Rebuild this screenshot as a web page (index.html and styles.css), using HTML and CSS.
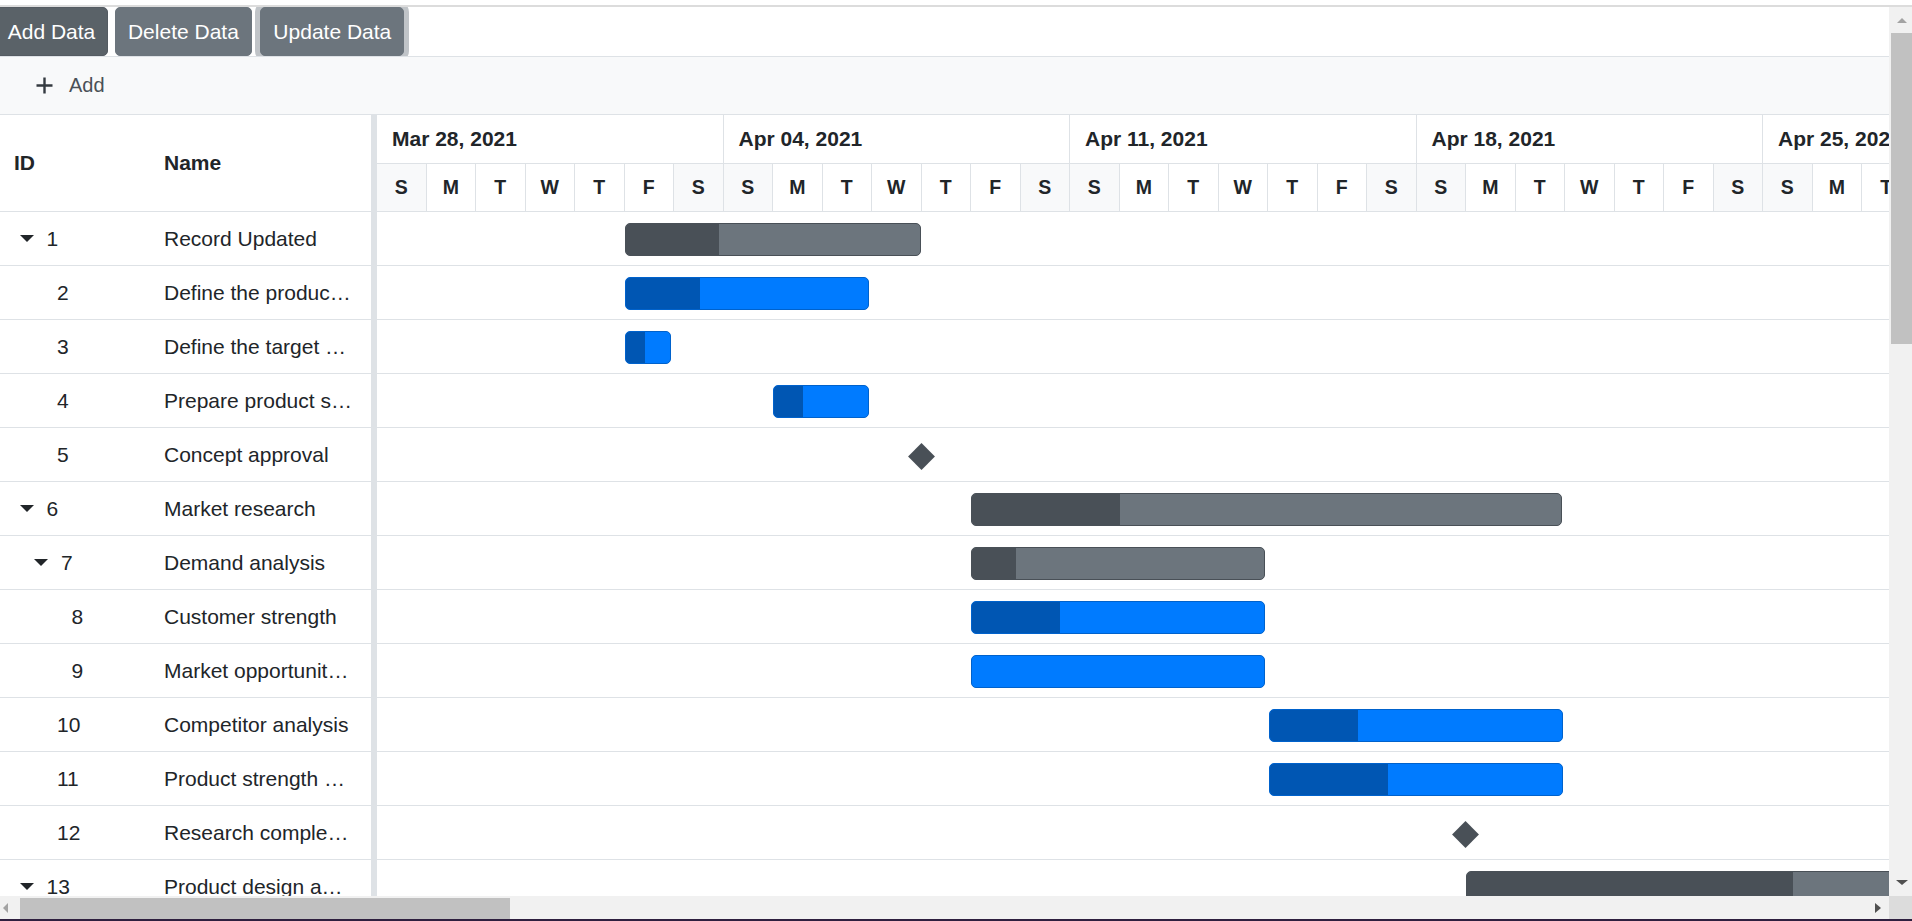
FILE: index.html
```html
<!DOCTYPE html>
<html lang="en">
<head>
<meta charset="utf-8">
<title>Gantt</title>
<link rel="stylesheet" href="styles.css">
</head>
<body>
<div class="topline"></div>
<div class="viewport">
  <div class="main">
    <div class="btnbar">
      <button class="btn btn-add">Add Data</button>
      <button class="btn btn-del">Delete Data</button>
      <button class="btn btn-upd">Update Data</button>
    </div>
    <div class="toolbar">
      <div class="tb-add">
        <svg class="plus" width="17" height="17" viewBox="0 0 17 17"><path d="M8.5 0.5V16.5M0.5 8.5H16.5" stroke="#343a40" stroke-width="2.4" fill="none"/></svg>
        <span>Add</span>
      </div>
    </div>
    <div class="gantt">
      <div class="grid-pane">
        <div class="grid-head">
          <div class="hc id">ID</div>
          <div class="hc name">Name</div>
        </div>
        <div class="grow"><div class="c id p0"><i class="caret"></i>1</div><div class="c name"><span class="txt">Record Updated</span></div></div>
        <div class="grow"><div class="c id l1">2</div><div class="c name"><span class="txt">Define the product usage</span></div></div>
        <div class="grow"><div class="c id l1">3</div><div class="c name"><span class="txt">Define the target audience</span></div></div>
        <div class="grow"><div class="c id l1">4</div><div class="c name"><span class="txt">Prepare product sketch and notes</span></div></div>
        <div class="grow"><div class="c id l1">5</div><div class="c name"><span class="txt">Concept approval</span></div></div>
        <div class="grow"><div class="c id p0"><i class="caret"></i>6</div><div class="c name"><span class="txt">Market research</span></div></div>
        <div class="grow"><div class="c id p1"><i class="caret"></i>7</div><div class="c name"><span class="txt">Demand analysis</span></div></div>
        <div class="grow"><div class="c id l2">8</div><div class="c name"><span class="txt">Customer strength</span></div></div>
        <div class="grow"><div class="c id l2">9</div><div class="c name"><span class="txt">Market opportunity analysis</span></div></div>
        <div class="grow"><div class="c id l1">10</div><div class="c name"><span class="txt">Competitor analysis</span></div></div>
        <div class="grow"><div class="c id l1">11</div><div class="c name"><span class="txt">Product strength analysis</span></div></div>
        <div class="grow"><div class="c id l1">12</div><div class="c name"><span class="txt">Research completed</span></div></div>
        <div class="grow"><div class="c id p0"><i class="caret"></i>13</div><div class="c name"><span class="txt">Product design and development</span></div></div>
      </div>
      <div class="splitter"></div>
      <div class="chart-pane">
        <div class="tier-top">
          <div class="week">Mar 28, 2021</div>
          <div class="week">Apr 04, 2021</div>
          <div class="week">Apr 11, 2021</div>
          <div class="week">Apr 18, 2021</div>
          <div class="week">Apr 25, 2021</div>
        </div>
        <div class="tier-bot">
          <div class="day we">S</div><div class="day">M</div><div class="day">T</div><div class="day">W</div><div class="day">T</div><div class="day">F</div><div class="day we">S</div>
          <div class="day we">S</div><div class="day">M</div><div class="day">T</div><div class="day">W</div><div class="day">T</div><div class="day">F</div><div class="day we">S</div>
          <div class="day we">S</div><div class="day">M</div><div class="day">T</div><div class="day">W</div><div class="day">T</div><div class="day">F</div><div class="day we">S</div>
          <div class="day we">S</div><div class="day">M</div><div class="day">T</div><div class="day">W</div><div class="day">T</div><div class="day">F</div><div class="day we">S</div>
          <div class="day we">S</div><div class="day">M</div><div class="day">T</div><div class="day">W</div><div class="day">T</div><div class="day">F</div><div class="day we">S</div>
        </div>
        <div class="crow"><div class="bar parent" style="left:247.5px;width:296.5px"><div class="prog" style="width:93px"></div></div></div>
        <div class="crow"><div class="bar child" style="left:247.5px;width:244.5px"><div class="prog" style="width:74px"></div></div></div>
        <div class="crow"><div class="bar child" style="left:247.5px;width:46.5px"><div class="prog" style="width:19px"></div></div></div>
        <div class="crow"><div class="bar child" style="left:396px;width:96px"><div class="prog" style="width:29px"></div></div></div>
        <div class="crow"><div class="ms" style="left:534.8px"></div></div>
        <div class="crow"><div class="bar parent" style="left:594px;width:591px"><div class="prog" style="width:148px"></div></div></div>
        <div class="crow"><div class="bar parent" style="left:594px;width:294px"><div class="prog" style="width:44px"></div></div></div>
        <div class="crow"><div class="bar child" style="left:594px;width:294px"><div class="prog" style="width:88px"></div></div></div>
        <div class="crow"><div class="bar child" style="left:594px;width:294px"><div class="prog" style="width:0px"></div></div></div>
        <div class="crow"><div class="bar child" style="left:891.5px;width:294px"><div class="prog" style="width:88px"></div></div></div>
        <div class="crow"><div class="bar child" style="left:891.5px;width:294px"><div class="prog" style="width:118.5px"></div></div></div>
        <div class="crow"><div class="ms" style="left:1079.2px"></div></div>
        <div class="crow"><div class="bar parent" style="left:1088.7px;width:900px"><div class="prog" style="width:326px"></div></div></div>
      </div>
    </div>
  </div>
  <div class="vscroll">
    <div class="vbtn vbtn-up"><i class="arr-up"></i></div>
    <div class="vtrack"><div class="vthumb"></div></div>
    <div class="vbtn vbtn-down"><i class="arr-down"></i></div>
  </div>
  <div class="hscroll">
    <div class="hbtn-l"><i class="arr-left"></i></div>
    <div class="htrack"><div class="hthumb"></div></div>
    <div class="hbtn-r"><i class="arr-right"></i></div>
  </div>
  <div class="corner"></div>
</div>
<div class="bottomline"></div>
</body>
</html>
```
FILE: styles.css
```css
* { box-sizing: border-box; }
html, body { margin: 0; padding: 0; }
body {
  width: 1912px;
  height: 921px;
  overflow: hidden;
  background: #fff;
  font-family: "Liberation Sans", Arial, sans-serif;
  color: #212529;
}
.topline { height: 7px; border-bottom: 2px solid #dcdcdc; }
.bottomline { height: 2px; background: #2e1f3f; }

.viewport {
  display: grid;
  grid-template-columns: 1889px 23px;
  grid-template-rows: 889px 23px;
}
.main { overflow: hidden; }

/* buttons */
.btnbar { display: flex; height: 49px; overflow: hidden; }
.btn {
  flex: none;
  font-family: "Liberation Sans", Arial, sans-serif;
  font-size: 21px;
  line-height: 31px;
  color: #fff;
  background: #6c757d;
  border: 1px solid #6c757d;
  border-radius: 5px;
  padding: 8px 12px;
  height: 49px;
  white-space: nowrap;
}
.btn-add { margin-left: -5.3px; background: #5a6268; border-color: #545b62; }
.btn-del { margin-left: 6.7px; }
.btn-upd { margin-left: 8.5px; box-shadow: 0 0 0 5px rgba(130, 138, 145, 0.5); }

/* toolbar */
.toolbar {
  height: 59px;
  background: #f8f9fa;
  border-top: 1px solid #dee2e6;
  border-bottom: 1px solid #dee2e6;
  display: flex;
  align-items: center;
  padding-left: 36px;
}
.tb-add { display: flex; align-items: center; gap: 16px; font-size: 20px; color: #495057; }
.plus { display: block; }

/* gantt */
.gantt { display: flex; height: 781px; }
.grid-pane { width: 371px; flex: none; }
.splitter { width: 6px; flex: none; background: #dee2e6; }
.chart-pane { flex: 1; min-width: 0; overflow: hidden; }

.grid-head {
  height: 97px;
  border-bottom: 1px solid #dee2e6;
  display: flex;
  align-items: center;
  font-weight: bold;
  font-size: 21px;
}
.hc.id { width: 149px; padding-left: 14px; }
.hc.name { padding-left: 15px; }

.grow {
  height: 54px;
  border-bottom: 1px solid #dee2e6;
  display: flex;
  align-items: center;
  font-size: 21px;
}
.c.id { width: 149px; flex: none; display: flex; align-items: center; }
.c.name { flex: 1; padding-left: 15px; min-width: 0; }
.txt {
  display: block;
  width: 189px;
  overflow: hidden;
  white-space: nowrap;
  text-overflow: ellipsis;
}
.p0 { padding-left: 19.5px; }
.p1 { padding-left: 34px; }
.l1 { padding-left: 57px; }
.l2 { padding-left: 71.5px; }
.caret {
  display: block;
  width: 0;
  height: 0;
  border-left: 7px solid transparent;
  border-right: 7px solid transparent;
  border-top: 7px solid #212529;
  margin-right: 13px;
}

/* timeline header */
.tier-top {
  height: 49px;
  border-bottom: 1px solid #dee2e6;
  display: flex;
  font-weight: bold;
  font-size: 21px;
}
.week {
  flex: none;
  width: 346.5px;
  border-right: 1px solid #dee2e6;
  padding-left: 15px;
  display: flex;
  align-items: center;
  white-space: nowrap;
}
.tier-bot {
  height: 48px;
  border-bottom: 1px solid #dee2e6;
  display: flex;
  font-weight: bold;
  font-size: 19.5px;
}
.day {
  flex: none;
  width: 49.5px;
  border-right: 1px solid #dee2e6;
  display: flex;
  align-items: center;
  justify-content: center;
}
.day.we { background: #f8f9fa; }

/* chart rows */
.crow {
  position: relative;
  height: 54px;
  border-bottom: 1px solid #dee2e6;
}
.bar {
  position: absolute;
  top: 11px;
  height: 33px;
  border: 1px solid;
  border-radius: 5px;
  overflow: hidden;
}
.bar .prog { height: 100%; }
.bar.parent { background: #6c757d; border-color: #495057; }
.bar.parent .prog { background: #495057; }
.bar.child { background: #007bff; border-color: #0062cc; }
.bar.child .prog { background: #0056b3; }
.ms {
  position: absolute;
  top: 18.5px;
  width: 19px;
  height: 19px;
  background: #495057;
  transform: rotate(45deg);
}

/* scrollbars */
.vscroll { background: #f1f1f1; display: flex; flex-direction: column; }
.vbtn { height: 23px; flex: none; display: flex; justify-content: center; align-items: center; padding-left: 2px; }
.vbtn-up { padding-top: 3px; }
.vbtn-down { padding-bottom: 4px; }
.vtrack { flex: 1; padding-left: 2px; padding-top: 3px; }
.vthumb { height: 311px; background: #c1c1c1; }
.arr-up {
  display: block; width: 0; height: 0;
  border-left: 5px solid transparent;
  border-right: 5px solid transparent;
  border-bottom: 5px solid #a3a3a3;
}
.arr-down {
  display: block; width: 0; height: 0;
  border-left: 6px solid transparent;
  border-right: 6px solid transparent;
  border-top: 5px solid #505050;
}
.hscroll { background: #f1f1f1; display: flex; }
.hbtn-l { width: 19.5px; flex: none; display: flex; align-items: center; padding-left: 3px; }
.htrack { flex: 1; padding-top: 2px; }
.hthumb { width: 490.5px; height: 21px; background: #c1c1c1; }
.hbtn-r { width: 23px; flex: none; display: flex; align-items: center; justify-content: center; }
.arr-left {
  display: block; width: 0; height: 0;
  border-top: 5px solid transparent;
  border-bottom: 5px solid transparent;
  border-right: 5px solid #a3a3a3;
}
.arr-right {
  display: block; width: 0; height: 0;
  border-top: 5px solid transparent;
  border-bottom: 5px solid transparent;
  border-left: 6px solid #505050;
}
.corner { background: #dcdcdc; }
```
